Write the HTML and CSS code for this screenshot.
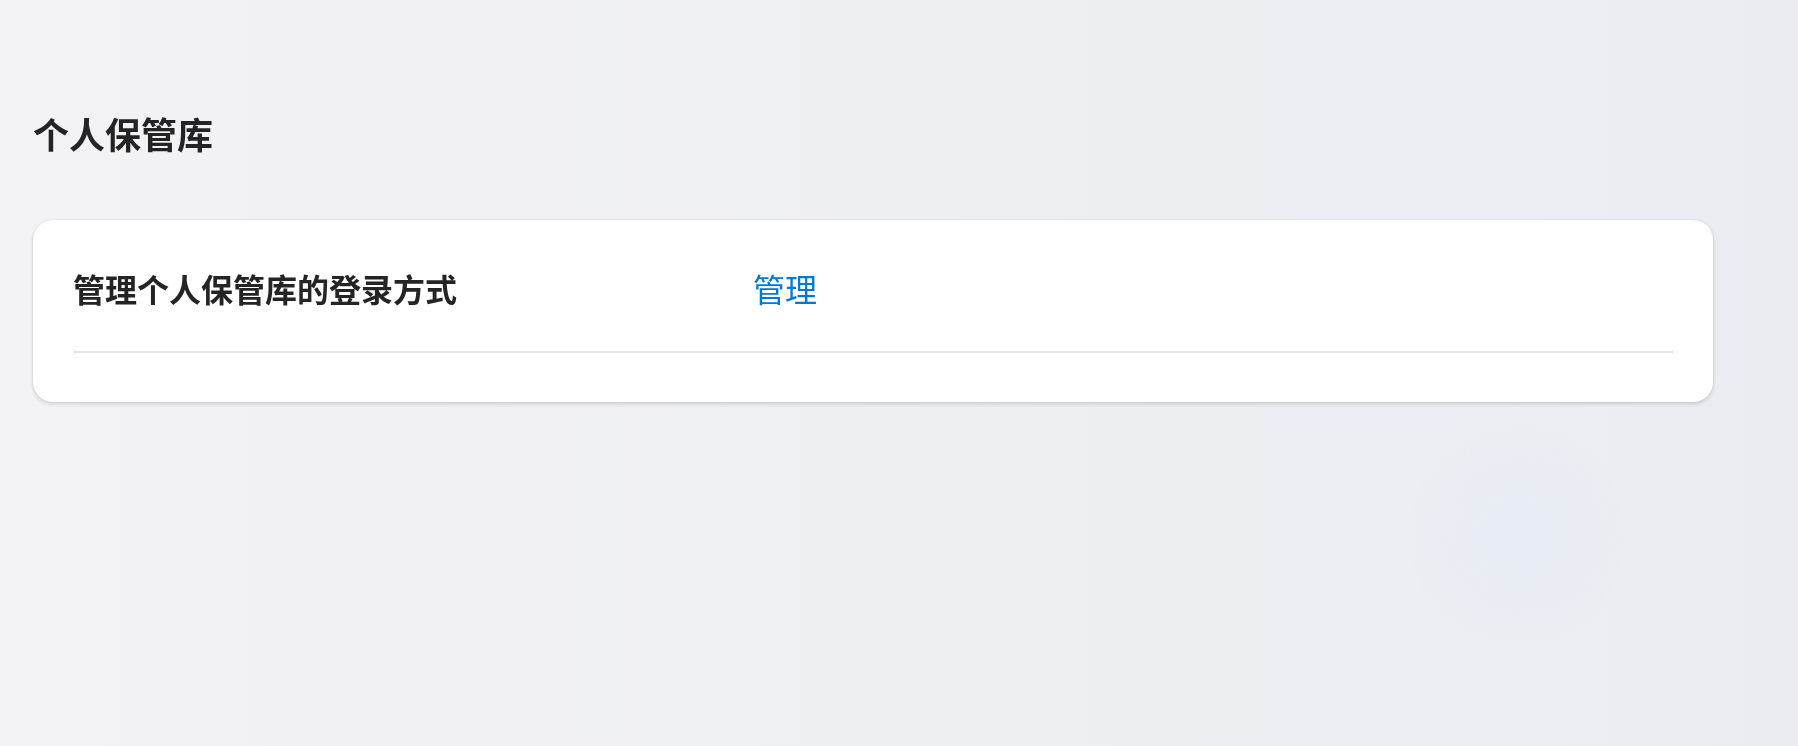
FILE: index.html
```html
<!DOCTYPE html>
<html lang="zh-CN">
<head>
    <meta charset="UTF-8">
    <title>个人保管库</title>
    <link rel="stylesheet" href="styles.css">
</head>
<body>
    <div class="backdrop"></div>
    <main class="page">
        <h1 class="page-title">个人保管库</h1>
        <section class="card">
            <div class="setting-row">
                <span class="setting-label">管理个人保管库的登录方式</span>
                <a href="#" class="setting-link">管理</a>
            </div>
        </section>
    </main>
</body>
</html>
```

FILE: styles.css
```css
html, body {
    height: 100%;
}
body {
    margin: 0;
    font-family: "Noto Sans CJK SC", "Noto Sans", sans-serif;
    color: #242424;
    background: linear-gradient(90deg, #f3f2f5 0%, #eeeff3 50%, #e9edf2 100%);
    overflow: hidden;
}
.backdrop {
    position: fixed;
    inset: 0;
    background: radial-gradient(circle at 1516px 535px, #e7ecf4 0, rgba(231,236,244,0) 110px);
    pointer-events: none;
}
.page {
    position: relative;
    padding: 108px 85px 0 33px;
}
.page-title {
    margin: 0;
    font-size: 36px;
    line-height: 50px;
    font-weight: 700;
}
.card {
    margin-top: 62px;
    background: #fff;
    border-radius: 20px;
    box-shadow: 0 2px 4px rgba(0,0,0,0.14), 0 0 2px rgba(0,0,0,0.12);
    padding: 0 40px 49px 40px;
}
.setting-row {
    display: flex;
    align-items: center;
    padding: 48px 0 43px;
    border-bottom: 2px solid #e6e6e9;
}
.setting-label {
    width: 680px;
    font-size: 32px;
    line-height: 40px;
    font-weight: 700;
}
.setting-link {
    font-size: 32px;
    line-height: 40px;
    color: #0078d4;
    text-decoration: none;
}
```
